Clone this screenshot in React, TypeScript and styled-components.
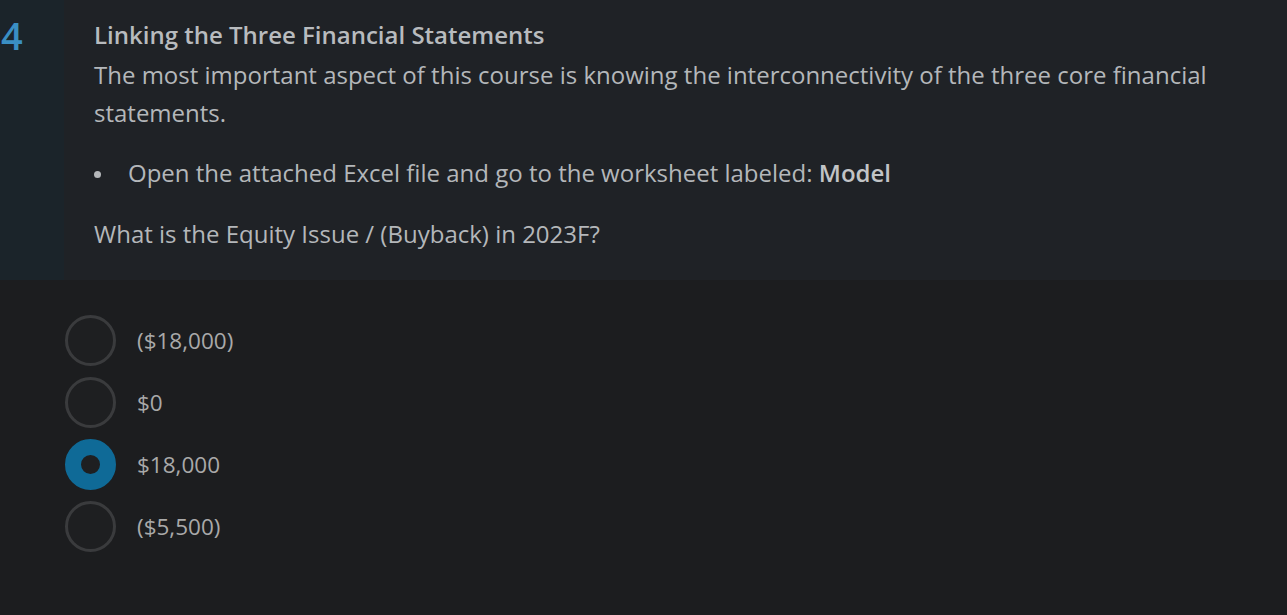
import React from "react";
import styled, { createGlobalStyle } from "styled-components";

const Global = createGlobalStyle`
  html, body { margin: 0; padding: 0; background: #1c1d1f; }
  body { font-family: "Open Sans", "Noto Sans", sans-serif; }
`;

const Page = styled.div`
  width: 1287px;
  height: 615px;
  background: #1c1d1f;
  overflow: hidden;
`;

const QuestionBlock = styled.section`
  display: flex;
  height: 280px;
`;

const NumberCol = styled.div`
  width: 64px;
  background: #1b242a;
  padding: 12px 0 0 1px;
  box-sizing: border-box;
  font-size: 38px;
  line-height: 46px;
  color: #3a8fc3;
  font-weight: 600;
`;

const Content = styled.div`
  flex: 1;
  background: #1f2226;
  padding: 16px 40px 0 30px;
  color: #b4b7ba;
  font-size: 24px;
`;

const Title = styled.h2`
  margin: 0 0 2px;
  font-size: 24px;
  font-weight: 600;
  line-height: 38px;
  color: #b8bbbe;
`;

const Body = styled.p`
  margin: 0;
  line-height: 38px;
  width: 1140px;
`;

const BulletList = styled.ul`
  margin: 22px 0 0;
  padding: 0;
  list-style: none;
  line-height: 38px;
`;

const BulletItem = styled.li`
  display: flex;
  align-items: center;
  &::before {
    content: "";
    width: 7px;
    height: 7px;
    border-radius: 50%;
    background: #b4b7ba;
    margin: 2px 27px 0 0;
    flex-shrink: 0;
  }
`;

const Strong = styled.b`
  font-weight: 600;
  color: #c2c4c6;
`;

const Question = styled.p`
  margin: 23px 0 0;
  line-height: 38px;
`;

const Options = styled.div`
  display: flex;
  flex-direction: column;
  gap: 11px;
  padding: 35px 0 0 65px;
`;

const Option = styled.label`
  display: flex;
  align-items: center;
  gap: 21px;
  font-size: 22.5px;
  color: #a9a9a9;
  cursor: pointer;
`;

const Radio = styled.span<{ $checked?: boolean }>`
  width: 51px;
  height: 51px;
  box-sizing: border-box;
  border-radius: 50%;
  flex-shrink: 0;
  border: ${(p) => (p.$checked ? "16.5px solid #0f6a97" : "3px solid #3a3b3d")};
  background: #1e1f21;
`;

const options = ["($18,000)", "$0", "$18,000", "($5,500)"];

export default function App() {
  return (
    <Page>
      <Global />
      <QuestionBlock>
        <NumberCol>4</NumberCol>
        <Content>
          <Title>Linking the Three Financial Statements</Title>
          <Body>
            The most important aspect of this course is knowing the interconnectivity of the three core financial
            statements.
          </Body>
          <BulletList>
            <BulletItem>
              <span>
                Open the attached Excel file and go to the worksheet labeled: <Strong>Model</Strong>
              </span>
            </BulletItem>
          </BulletList>
          <Question>What is the Equity Issue / (Buyback) in 2023F?</Question>
        </Content>
      </QuestionBlock>
      <Options>
        {options.map((o, i) => (
          <Option key={o}>
            <Radio $checked={i === 2} />
            {o}
          </Option>
        ))}
      </Options>
    </Page>
  );
}
